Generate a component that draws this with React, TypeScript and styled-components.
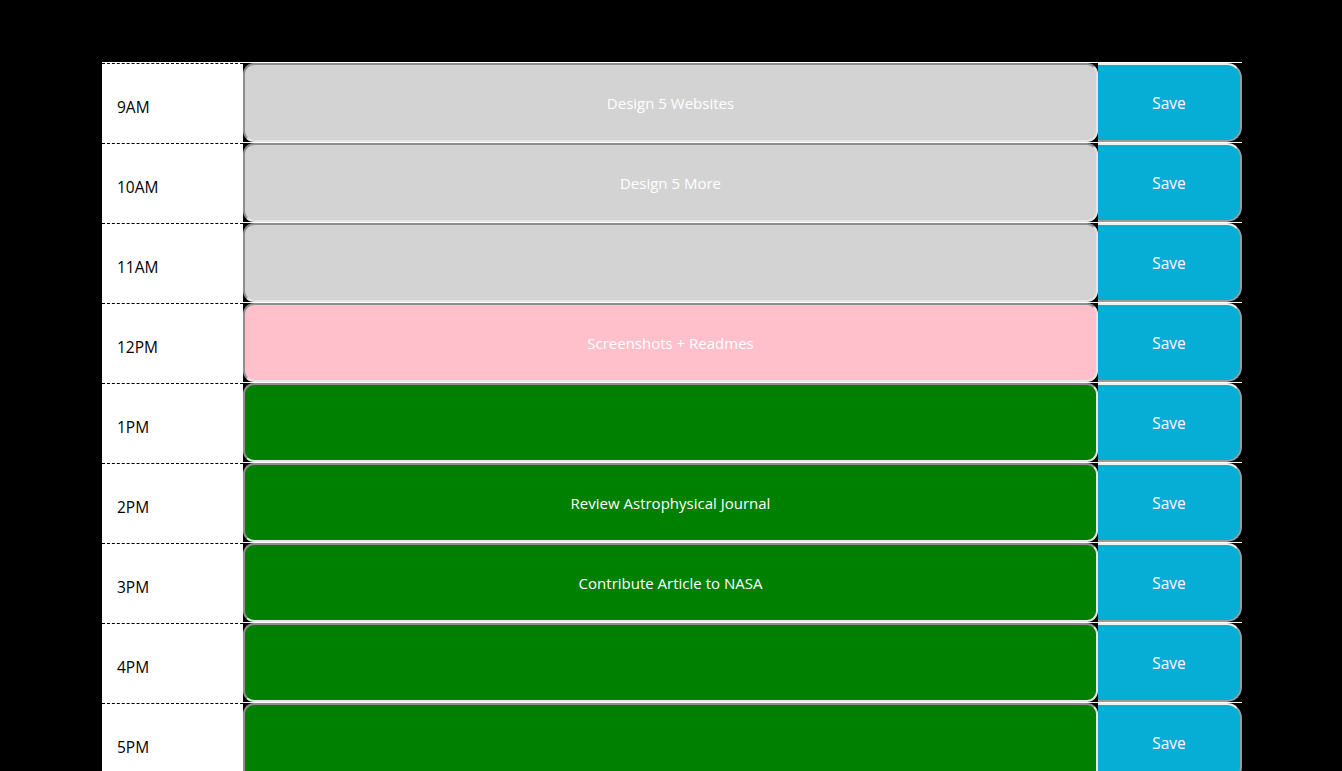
import React from "react";
import styled, { createGlobalStyle } from "styled-components";

const GlobalStyle = createGlobalStyle`
  html, body {
    margin: 0;
    padding: 0;
    background: #000000;
  }
  body {
    font-family: "Open Sans", "Noto Sans", sans-serif;
    line-height: 1;
    overflow: hidden;
  }
  * { box-sizing: border-box; }
`;

type Status = "past" | "present" | "future";

const bg: Record<Status, string> = {
  past: "#d3d3d3",
  present: "#ffc0cb",
  future: "#008000",
};

const Page = styled.div`
  padding-top: 62px;
  padding-left: 102px;
`;

const Container = styled.div`
  width: 1140px;
  display: flex;
  flex-direction: column;
`;

const Row = styled.div`
  display: flex;
  height: 80px;
  border-top: 1px solid #ffffff;
`;

const Hour = styled.div`
  width: 141px;
  flex: none;
  background: #ffffff;
  color: #000000;
  border-top: 1px dashed #000000;
  padding: 36px 0 0 15px;
  font-size: 15.5px;
`;

const Description = styled.textarea<{ $status: Status }>`
  width: 855px;
  flex: none;
  height: 79px;
  margin: 0;
  resize: none;
  background: ${(p) => bg[p.$status]};
  color: #ffffff;
  font-family: "Open Sans", "Noto Sans", sans-serif;
  font-size: 15px;
  line-height: 1.4;
  text-align: center;
  padding: 28px 10px 0;
  border-style: solid;
  border-width: 2px;
  border-color: #8e8e8e #e6e6e6 #e6e6e6 #8e8e8e;
  border-radius: 11px;
  overflow: hidden;
  outline: none;
`;

const SaveButton = styled.button`
  width: 144px;
  flex: none;
  height: 79px;
  margin: 0;
  background: #06aed5;
  color: #ffffff;
  font-family: "Open Sans", "Noto Sans", sans-serif;
  font-size: 15.5px;
  border-style: solid;
  border-width: 2px 2px 2px 0;
  border-color: #eeeeee #9a9a9a #9a9a9a #9a9a9a;
  border-radius: 0 15px 15px 0;
  padding: 0;
  cursor: pointer;
`;

const hours: { label: string; status: Status; text: string }[] = [
  { label: "9AM", status: "past", text: "Design 5 Websites" },
  { label: "10AM", status: "past", text: "Design 5 More" },
  { label: "11AM", status: "past", text: "" },
  { label: "12PM", status: "present", text: "Screenshots + Readmes" },
  { label: "1PM", status: "future", text: "" },
  { label: "2PM", status: "future", text: "Review Astrophysical Journal" },
  { label: "3PM", status: "future", text: "Contribute Article to NASA" },
  { label: "4PM", status: "future", text: "" },
  { label: "5PM", status: "future", text: "" },
];

export default function App() {
  return (
    <>
      <GlobalStyle />
      <Page>
        <Container>
          {hours.map((h) => (
            <Row key={h.label}>
              <Hour>{h.label}</Hour>
              <Description $status={h.status} defaultValue={h.text} />
              <SaveButton>Save</SaveButton>
            </Row>
          ))}
        </Container>
      </Page>
    </>
  );
}
